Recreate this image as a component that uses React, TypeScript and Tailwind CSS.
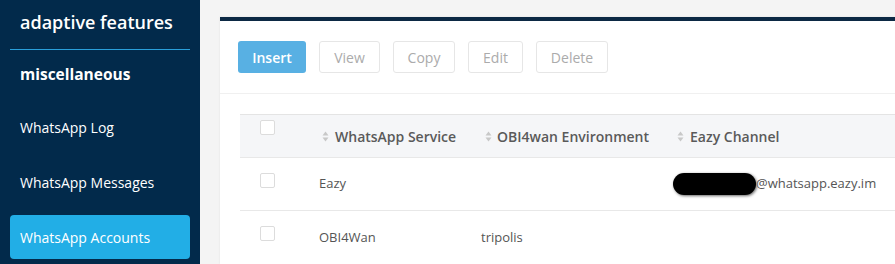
import React from "react";

const font = { fontFamily: '"Open Sans", "Noto Sans", sans-serif' };

function SortIcon() {
  return (
    <svg width="7" height="11" viewBox="0 0 7 11" className="shrink-0">
      <path d="M3.5 0.5 L6.5 4.5 L0.5 4.5 Z" fill="#c8c8c8" />
      <path d="M3.5 10.5 L6.5 6.5 L0.5 6.5 Z" fill="#c8c8c8" />
    </svg>
  );
}

function Checkbox() {
  return <div className="w-[15px] h-[15px] rounded-[2px] border border-[#dcdcdc] bg-white" />;
}

export default function App() {
  return (
    <div className="flex w-[895px] h-[264px] overflow-hidden" style={font}>
      <aside className="w-[200px] shrink-0 bg-[#022a4b] px-[10px]">
        <div className="h-[50px] border-b border-[#2a9fda] pl-[10px] pt-[10px]">
          <div className="text-white font-semibold text-[18px] leading-[24px]">adaptive features</div>
        </div>
        <div className="h-[50px] pl-[10px] flex items-center text-white font-bold text-[15.5px]">miscellaneous</div>
        <div className="mt-[5px] flex flex-col gap-[11px]">
          <div className="h-[44px] pl-[10px] flex items-center text-white text-[14px]">WhatsApp Log</div>
          <div className="h-[44px] pl-[10px] flex items-center text-white text-[14px]">WhatsApp Messages</div>
          <div className="h-[44px] pl-[10px] flex items-center text-white text-[14px] bg-[#22aee6] rounded-[4px]">WhatsApp Accounts</div>
        </div>
      </aside>
      <main className="flex-1 bg-[#f4f4f4] pl-[20px] pt-[17px]">
        <div className="bg-white border-t-4 border-[#0c2944] h-full shadow-[0_0_2px_rgba(0,0,0,0.08)]">
          <div className="flex gap-[13px] pl-[18px] pt-[20px] pb-[20px] border-b border-[#f0f0f0]">
            <button className="h-[32px] w-[68px] rounded-[3px] bg-[#58b0e3] text-white text-[14px] font-semibold">Insert</button>
            <button className="h-[32px] w-[61px] rounded-[3px] border border-[#e6e6e6] bg-white text-[#ababab] text-[14px]">View</button>
            <button className="h-[32px] w-[62px] rounded-[3px] border border-[#e6e6e6] bg-white text-[#ababab] text-[14px]">Copy</button>
            <button className="h-[32px] w-[55px] rounded-[3px] border border-[#e6e6e6] bg-white text-[#ababab] text-[14px]">Edit</button>
            <button className="h-[32px] w-[72px] rounded-[3px] border border-[#e6e6e6] bg-white text-[#ababab] text-[14px]">Delete</button>
          </div>
          <div className="pl-[20px] pt-[20px]">
            <div className="border-t border-[#e4e4e4]">
              <div className="grid grid-cols-[60px_162px_192px_1fr] h-[43px] bg-[#f5f6f8] border-b border-[#e8e8e8] text-[#5a5a5a] text-[14px] font-semibold">
                <div className="pl-[20px] pt-[5px]">
                  <Checkbox />
                </div>
                <div className="pl-[22px] flex items-center gap-[6px]">
                  <SortIcon />
                  <span>WhatsApp Service</span>
                </div>
                <div className="pl-[23px] flex items-center gap-[5px]">
                  <SortIcon />
                  <span>OBI4wan Environment</span>
                </div>
                <div className="pl-[23px] flex items-center gap-[6px]">
                  <SortIcon />
                  <span>Eazy Channel</span>
                </div>
              </div>
              <div className="grid grid-cols-[60px_162px_192px_1fr] h-[53px] border-b border-[#e8e8e8] text-[#555] text-[13px]">
                <div className="pl-[20px] pt-[15px]">
                  <Checkbox />
                </div>
                <div className="pl-[19px] flex items-center">Eazy</div>
                <div className="pl-[19px] flex items-center"></div>
                <div className="pl-[19px] flex items-center">
                  <span className="inline-block w-[83px] h-[22px] rounded-full bg-black shadow-[1px_1px_3px_rgba(0,0,0,0.6)]" />
                  <span>@whatsapp.eazy.im</span>
                </div>
              </div>
              <div className="grid grid-cols-[60px_162px_192px_1fr] h-[53px] text-[#555] text-[13px]">
                <div className="pl-[20px] pt-[15px]">
                  <Checkbox />
                </div>
                <div className="pl-[19px] flex items-center">OBI4Wan</div>
                <div className="pl-[19px] flex items-center">tripolis</div>
                <div className="pl-[19px] flex items-center"></div>
              </div>
            </div>
          </div>
        </div>
      </main>
    </div>
  );
}
